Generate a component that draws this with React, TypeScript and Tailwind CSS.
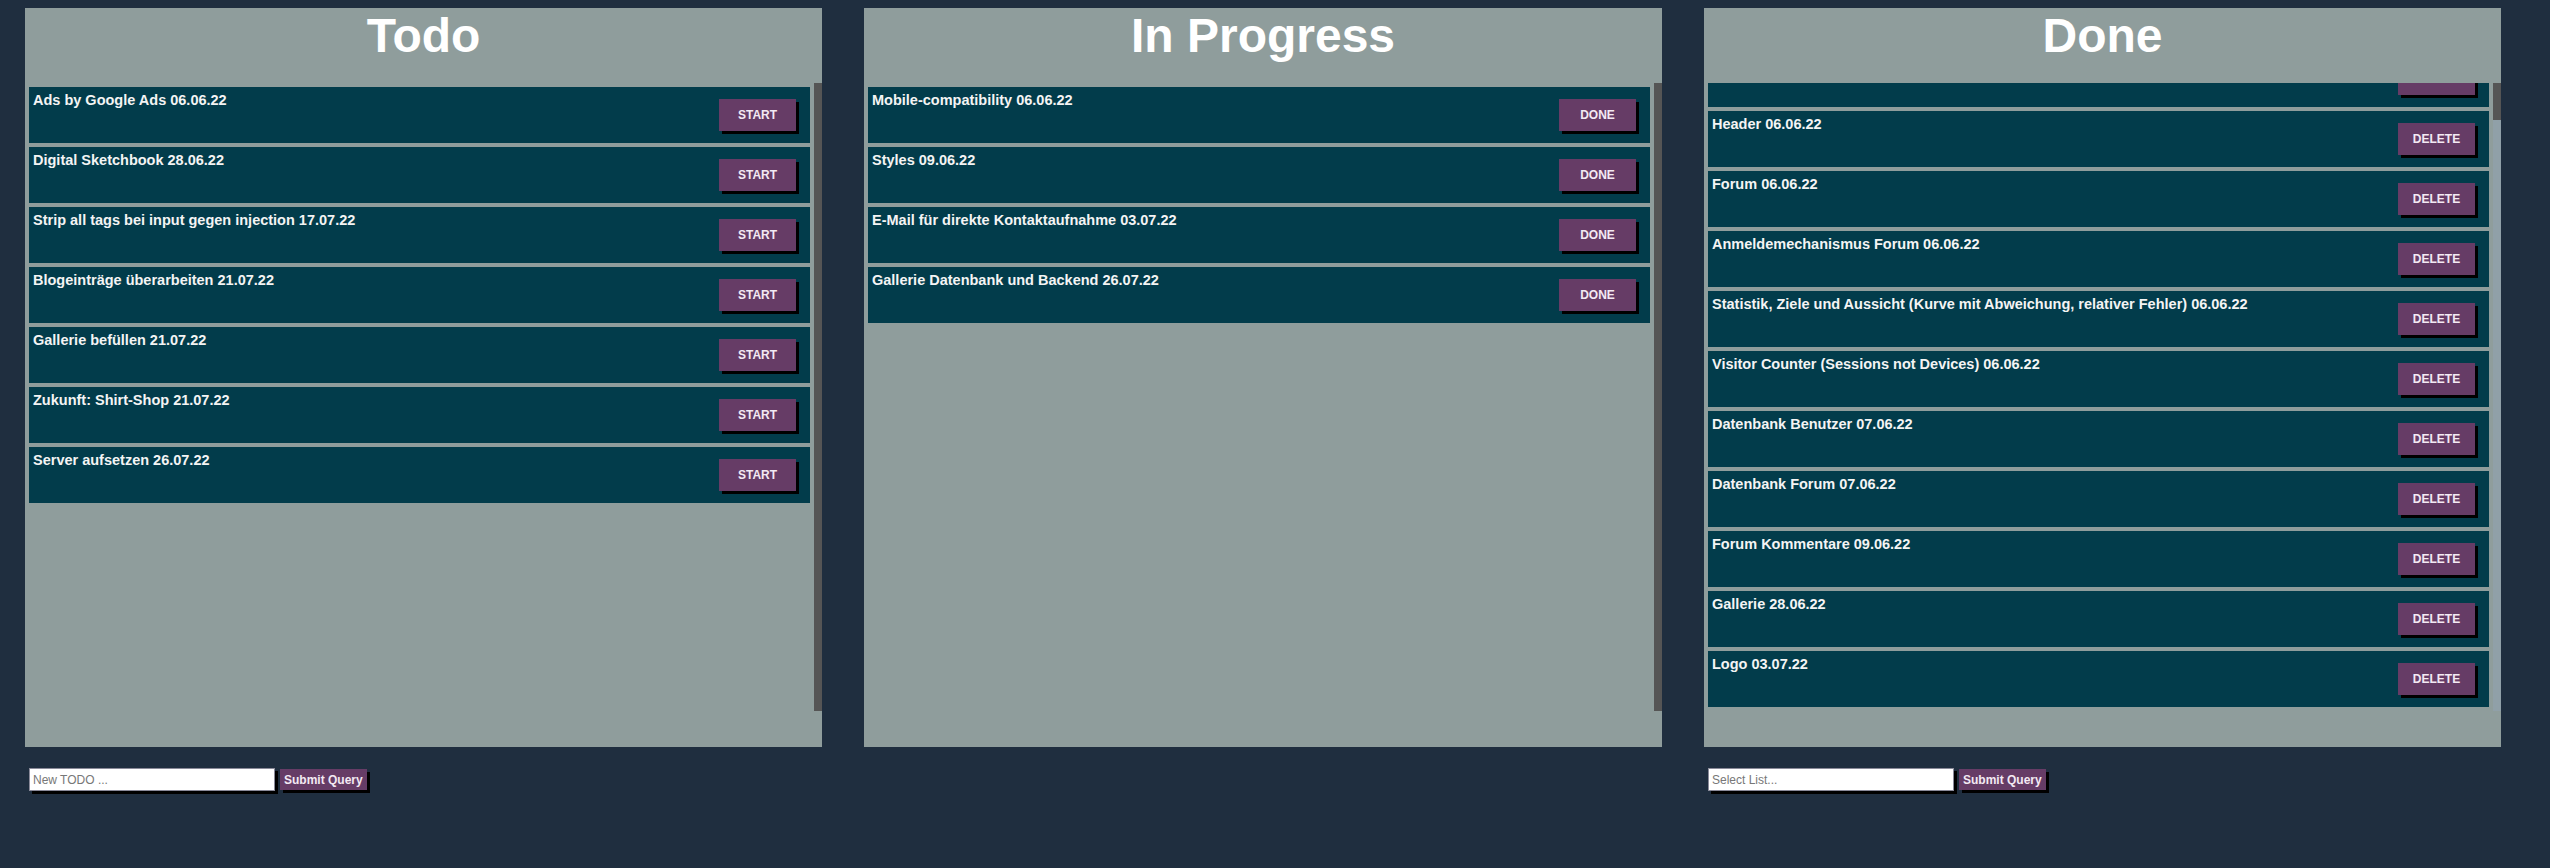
const todo = [
  'Ads by Google Ads 06.06.22',
  'Digital Sketchbook 28.06.22',
  'Strip all tags bei input gegen injection 17.07.22',
  'Blogeinträge überarbeiten 21.07.22',
  'Gallerie befüllen 21.07.22',
  'Zukunft: Shirt-Shop 21.07.22',
  'Server aufsetzen 26.07.22',
];

const inProgress = [
  'Mobile-compatibility 06.06.22',
  'Styles 09.06.22',
  'E-Mail für direkte Kontaktaufnahme 03.07.22',
  'Gallerie Datenbank und Backend 26.07.22',
];

const done = [
  '',
  'Header 06.06.22',
  'Forum 06.06.22',
  'Anmeldemechanismus Forum 06.06.22',
  'Statistik, Ziele und Aussicht (Kurve mit Abweichung, relativer Fehler) 06.06.22',
  'Visitor Counter (Sessions not Devices) 06.06.22',
  'Datenbank Benutzer 07.06.22',
  'Datenbank Forum 07.06.22',
  'Forum Kommentare 09.06.22',
  'Gallerie 28.06.22',
  'Logo 03.07.22',
];

function Item({ text, action, first }: { text: string; action: string; first?: boolean }) {
  return (
    <div
      className={`flex justify-between h-[56px] bg-[#023c4b] p-[4px] ${first ? 'mt-[-32px]' : 'mt-[4px]'}`}
    >
      <span className="text-[14.5px] font-bold text-[#f4f4f4] leading-[1.3] self-start">{text}</span>
      <button className="self-center mr-[10px] w-[77px] h-[32px] shrink-0 bg-[#663c66] text-[12px] font-bold text-[#f3e9f3] shadow-[3px_3px_0_#000]">
        {first ? '' : action}
      </button>
    </div>
  );
}

function Column({
  title,
  items,
  action,
  scrolled,
  placeholder,
  width,
}: {
  title: string;
  items: string[];
  action: string;
  scrolled?: boolean;
  placeholder?: string;
  width: string;
}) {
  return (
    <div className={`${width} shrink-0`}>
      <div className="h-[739px] bg-[#8f9d9c] flex flex-col">
        <div className="h-[75px] pt-[4px] text-center">
          <h1 className="text-[48px] leading-none font-bold text-white">{title}</h1>
        </div>
        <div className="h-[628px] flex">
          <div className="flex-1 overflow-hidden px-[4px]">
            {items.map((t, i) => (
              <Item key={i} text={t} action={action} first={scrolled && i === 0} />
            ))}
          </div>
          {/* scrollbar */}
          <div className={`w-[8px] ${scrolled ? 'bg-[#90a0a8]' : 'bg-[#555555]'}`}>
            {scrolled && <div className="h-[37px] bg-[#555555]" />}
          </div>
        </div>
      </div>
      {placeholder && (
        <form className="mt-[21px] ml-[4px] flex items-start gap-[5px]" onSubmit={(e) => e.preventDefault()}>
          <input
            placeholder={placeholder}
            className="w-[246px] h-[23px] bg-white border border-[#8a8a99] px-[3px] text-[12px] text-black placeholder:text-[#777] shadow-[3px_3px_0_#000] outline-none"
          />
          <button
            type="submit"
            className="h-[21px] mt-[1px] px-[4px] bg-[#663c66] text-[12px] font-bold text-[#f3e9f3] shadow-[3px_3px_0_#000]"
          >
            Submit Query
          </button>
        </form>
      )}
    </div>
  );
}

export default function App() {
  return (
    <div
      className="min-h-screen bg-[#1f2e3f] pt-[8px] pl-[25px] flex gap-[42px]"
      style={{ fontFamily: '"Liberation Sans", Arial, sans-serif' }}
    >
      <Column title="Todo" items={todo} action="START" placeholder="New TODO ..." width="w-[797px]" />
      <Column title="In Progress" items={inProgress} action="DONE" width="w-[798px]" />
      <Column title="Done" items={done} action="DELETE" scrolled placeholder="Select List..." width="w-[797px]" />
    </div>
  );
}
